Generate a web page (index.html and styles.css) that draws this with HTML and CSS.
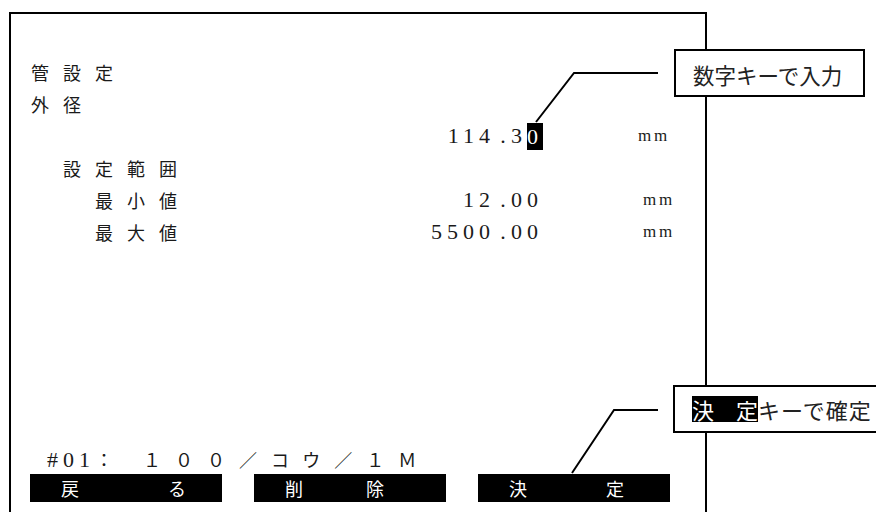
FILE: index.html
```html
<!DOCTYPE html>
<html lang="ja">
<head>
<meta charset="utf-8">
<title>管設定</title>
<link rel="stylesheet" href="styles.css">
</head>
<body>
<div class="frame">
  <div class="screen">
    <div class="line"><span class="jp">管設定</span></div>
    <div class="line"><span class="jp">外径</span></div>
    <div class="line">
      <div class="main"><span></span><span class="num">114<span class="dot">.</span>3<span class="cur">0</span></span></div>
      <span class="unit">mm</span>
    </div>
    <div class="line"><span class="jp ind2">設定範囲</span></div>
    <div class="line">
      <div class="main"><span class="jp ind4">最小値</span><span class="num">12<span class="dot">.</span>00</span></div>
      <span class="unit unit-b">mm</span>
    </div>
    <div class="line">
      <div class="main"><span class="jp ind4">最大値</span><span class="num">5500<span class="dot">.</span>00</span></div>
      <span class="unit unit-b">mm</span>
    </div>
  </div>
  <div class="status"><span class="num">#01</span><span class="jp">：</span><span class="jp sp">１００／コウ／１Ｍ</span></div>
  <div class="keys">
    <div class="key key-back"><span>戻</span><span>る</span></div>
    <div class="key key-del"><span>削</span><span>除</span></div>
    <div class="key key-ok"><span>決</span><span>定</span></div>
  </div>
</div>

<div class="callout callout-input">数字キーで入力</div>
<div class="callout callout-ok"><span class="hl">決　定</span><span class="rest">キーで確定</span></div>

<svg class="leaders" width="876" height="512" viewBox="0 0 876 512" aria-hidden="true">
  <polyline points="658,73 574,73 536,122" fill="none" stroke="#000" stroke-width="2"/>
  <polyline points="658,410 614,410 572,473" fill="none" stroke="#000" stroke-width="2"/>
</svg>
</body>
</html>
```
FILE: styles.css
```css
html, body {
  margin: 0;
  padding: 0;
  background: #fff;
}

body {
  position: relative;
  width: 876px;
  height: 512px;
  overflow: hidden;
  color: #1a1a1a;
  font-family: "Noto Sans CJK JP", sans-serif;
}

.frame {
  margin: 12px 0 0 9px;
  width: 694px;
  height: 520px;
  border: 2px solid #000;
  border-bottom: none;
}

.screen {
  padding: 42px 0 0 20px;
}

.line {
  display: flex;
  align-items: center;
  height: 32px;
  line-height: 32px;
  white-space: nowrap;
}

.main {
  display: flex;
  justify-content: space-between;
  width: 512px;
}

.jp {
  font-family: "Noto Sans CJK JP", sans-serif;
  font-size: 18px;
  letter-spacing: 14px;
}

.ind2 { padding-left: 32px; }
.ind4 { padding-left: 64px; }

.num {
  font-family: "Liberation Serif", "Noto Sans CJK JP", serif;
  font-size: 22px;
  letter-spacing: 5px;
}

.dot {
  display: inline-block;
  width: 16px;
  letter-spacing: 0;
  text-align: center;
}

.cur {
  display: inline-block;
  vertical-align: top;
  margin-top: 3px;
  line-height: 27px;
  background: #000;
  color: #fff;
}

.unit {
  margin-left: 95px;
  font-family: "Liberation Serif", serif;
  font-size: 17px;
  letter-spacing: 2.8px;
}

.unit-b { margin-left: 100px; }

.status {
  margin-top: 196px;
  padding-left: 36px;
  height: 30px;
  line-height: 30px;
  white-space: nowrap;
}

.status .sp { margin-left: 16px; }

.keys {
  display: flex;
  gap: 32px;
  padding-left: 19px;
}

.key {
  display: flex;
  width: 192px;
  height: 28px;
  line-height: 28px;
  padding-left: 31px;
  box-sizing: border-box;
  background: #000;
  color: #fff;
  font-size: 18px;
}

.key-back { gap: 89px; }
.key-del { gap: 63px; }
.key-ok { gap: 79px; }

.callout {
  position: absolute;
  display: flex;
  align-items: center;
  height: 48px;
  box-sizing: border-box;
  border: 2px solid #000;
  background: #fff;
  padding: 2px 0 0 17px;
  white-space: nowrap;
  color: #222;
}

.callout-input {
  left: 674px;
  top: 49px;
  width: 191px;
  font-size: 21.5px;
}

.callout-ok {
  left: 673px;
  top: 385px;
  width: 240px;
  font-size: 22px;
  padding-top: 0;
}

.hl {
  display: inline-block;
  line-height: 26px;
  background: #000;
  color: #fff;
}

.rest { letter-spacing: 1px; }

.leaders {
  position: absolute;
  left: 0;
  top: 0;
  pointer-events: none;
}
```
